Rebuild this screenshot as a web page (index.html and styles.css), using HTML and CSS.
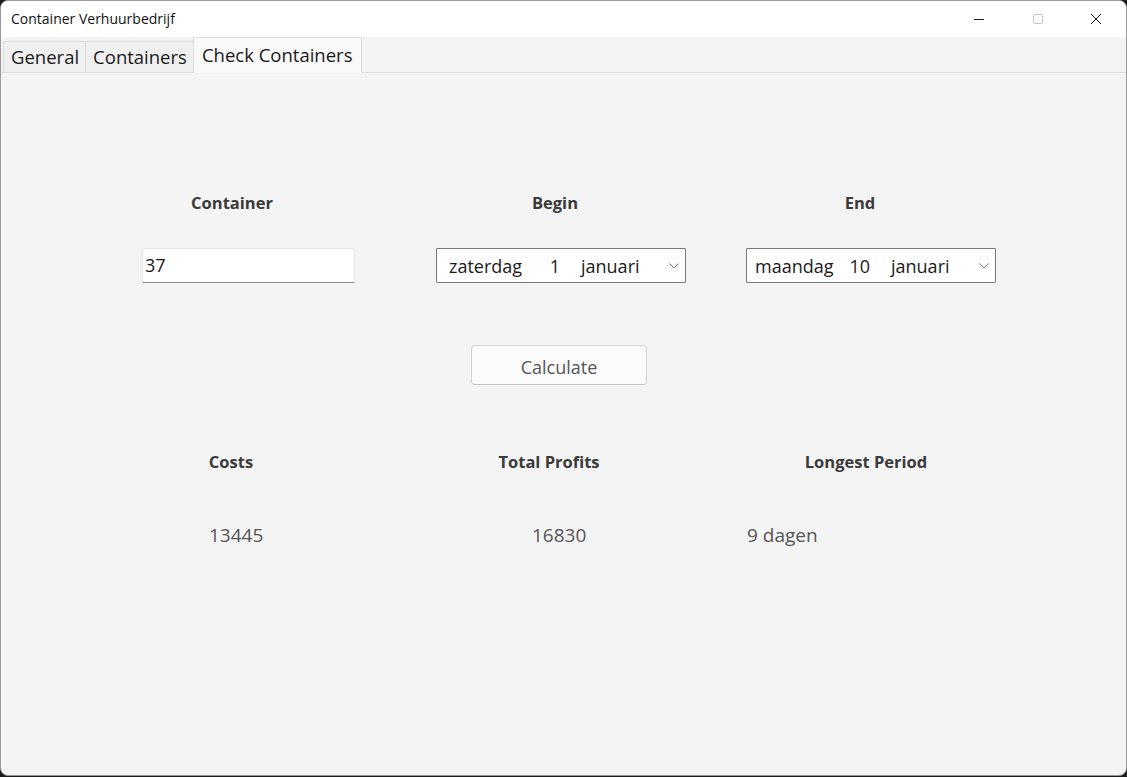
FILE: index.html
```html
<!DOCTYPE html>
<html lang="nl">
<head>
<meta charset="utf-8">
<title>Container Verhuurbedrijf</title>
<link rel="stylesheet" href="styles.css">
</head>
<body>
<div class="window">
  <div class="titlebar">
    <span class="title">Container Verhuurbedrijf</span>
    <div class="controls">
      <span class="ctl">
        <svg width="12" height="12" viewBox="0 0 12 12"><path d="M1 6.5h10" stroke="#1a1a1a" stroke-width="1"/></svg>
      </span>
      <span class="ctl">
        <svg width="12" height="12" viewBox="0 0 12 12"><rect x="1.5" y="1.5" width="9" height="9" rx="1.5" fill="none" stroke="#c4c4c4" stroke-width="1"/></svg>
      </span>
      <span class="ctl">
        <svg width="12" height="12" viewBox="0 0 12 12"><path d="M1 1L11 11M11 1L1 11" stroke="#1a1a1a" stroke-width="1"/></svg>
      </span>
    </div>
  </div>
  <div class="tabstrip">
    <span class="tab">General</span>
    <span class="tab">Containers</span>
    <span class="tab active">Check Containers</span>
  </div>
  <div class="content">
    <div class="row labels">
      <div class="field f1"><span class="label l1">Container</span></div>
      <div class="field f2"><span class="label l2">Begin</span></div>
      <div class="field f3"><span class="label l3">End</span></div>
    </div>
    <div class="row inputs">
      <div class="field f1"><div class="textbox">37</div></div>
      <div class="field f2">
        <div class="combo">
          <span class="wd">zaterdag</span><span class="day">1</span><span class="mon">januari</span>
          <svg class="chev" width="10" height="6" viewBox="0 0 10 6"><path d="M0.5 0.5L5 5L9.5 0.5" fill="none" stroke="#777" stroke-width="1"/></svg>
        </div>
      </div>
      <div class="field f3">
        <div class="combo">
          <span class="wd wd2">maandag</span><span class="day">10</span><span class="mon">januari</span>
          <svg class="chev" width="10" height="6" viewBox="0 0 10 6"><path d="M0.5 0.5L5 5L9.5 0.5" fill="none" stroke="#777" stroke-width="1"/></svg>
        </div>
      </div>
    </div>
    <div class="button-row">
      <button class="btn">Calculate</button>
    </div>
    <div class="results">
      <div class="res r1"><span class="label">Costs</span><span class="value">13445</span></div>
      <div class="res r2"><span class="label">Total Profits</span><span class="value">16830</span></div>
      <div class="res r3"><span class="label">Longest Period</span><span class="value">9 dagen</span></div>
    </div>
  </div>
</div>
</body>
</html>
```
FILE: styles.css
```css
html, body {
  margin: 0;
  padding: 0;
  background: #1c1c1c;
  width: 1127px;
  height: 777px;
  overflow: hidden;
}
body {
  font-family: "Open Sans", "Noto Sans", sans-serif;
}
.window {
  box-sizing: border-box;
  width: 1127px;
  height: 776px;
  border: 1px solid #9a9a9a;
  border-radius: 8px;
  background: #f4f4f4;
  overflow: hidden;
  display: flex;
  flex-direction: column;
}
.titlebar {
  height: 36px;
  background: #ffffff;
  display: flex;
  align-items: center;
  justify-content: space-between;
}
.title {
  font-size: 14px;
  color: #111;
  padding-left: 10px;
  padding-bottom: 2px;
}
.controls {
  display: flex;
  height: 100%;
  padding-right: 1px;
}
.ctl {
  width: 59px;
  display: flex;
  align-items: center;
  justify-content: center;
}
.ctl:last-child { width: 58px; }
.tabstrip {
  height: 36px;
  display: flex;
  align-items: flex-end;
  padding-left: 2px;
  background: #f3f3f3;
  border-bottom: 1px solid #dedede;
  box-sizing: border-box;
}
.tab {
  box-sizing: border-box;
  height: 31px;
  font-size: 18.5px;
  line-height: 29px;
  color: #1a1a1a;
  background: #f0f0f0;
  border: 1px solid #dcdcdc;
  border-bottom: none;
  padding: 0 6px 0 7px;
  margin-right: -1px;
}
.tab.active {
  height: 36px;
  line-height: 34px;
  background: #f9f9f9;
  padding: 0 9px 0 8px;
  margin-bottom: -1px;
  position: relative;
}
.content {
  flex: 1;
  padding-top: 119px;
}
.row {
  display: flex;
}
.field.f1 { margin-left: 141px; width: 213px; }
.field.f2 { margin-left: 81px; width: 250px; }
.field.f3 { margin-left: 60px; width: 250px; }
.labels .field {
  display: flex;
  justify-content: center;
}
.label {
  font-size: 16.5px;
  font-weight: 700;
  color: #3a3a3a;
  line-height: 22px;
}
.l1 { margin-right: 33px; }
.l2 { margin-right: 12px; }
.l3 { margin-right: 22px; }
.inputs {
  margin-top: 34px;
}
.textbox {
  box-sizing: border-box;
  height: 35px;
  background: #fff;
  border: 1px solid #e6e6e6;
  border-bottom: 1px solid #8c8c8c;
  font-size: 18px;
  line-height: 33px;
  color: #1a1a1a;
  padding-left: 2px;
}
.combo {
  box-sizing: border-box;
  height: 35px;
  background: #fff;
  border: 1px solid #7a7a7a;
  border-radius: 1px;
  display: flex;
  align-items: center;
  font-size: 18px;
  color: #1a1a1a;
  position: relative;
}
.wd { width: 88px; padding-left: 12px; }
.wd.wd2 { padding-left: 8px; width: 92px; }
.day { width: 23px; text-align: right; }
.mon { margin-left: 21px; }
.chev {
  position: absolute;
  right: 6px;
  top: 14px;
}
.button-row {
  margin-top: 62px;
  display: flex;
  padding-left: 470px;
}
.btn {
  box-sizing: border-box;
  width: 176px;
  height: 40px;
  background: #fbfbfb;
  border: 1px solid #d2d2d2;
  border-bottom-color: #c2c2c2;
  border-radius: 4px;
  font-family: "Open Sans", "Noto Sans", sans-serif;
  font-size: 18px;
  color: #555;
  padding: 3px 0 0 0;
}
.results {
  margin-top: 66px;
  display: flex;
}
.res {
  display: flex;
  flex-direction: column;
}
.res .label { text-align: center; }
.value {
  margin-top: 50px;
  font-size: 19px;
  line-height: 24px;
  color: #555;
}
.r1 { margin-left: 141px; width: 178px; }
.r1 .value { padding-left: 67px; }
.r2 { margin-left: 120px; width: 218px; }
.r2 .value { padding-left: 92px; }
.r3 { margin-left: 89px; width: 238px; }
.r3 .value { padding-left: 0; }
```
